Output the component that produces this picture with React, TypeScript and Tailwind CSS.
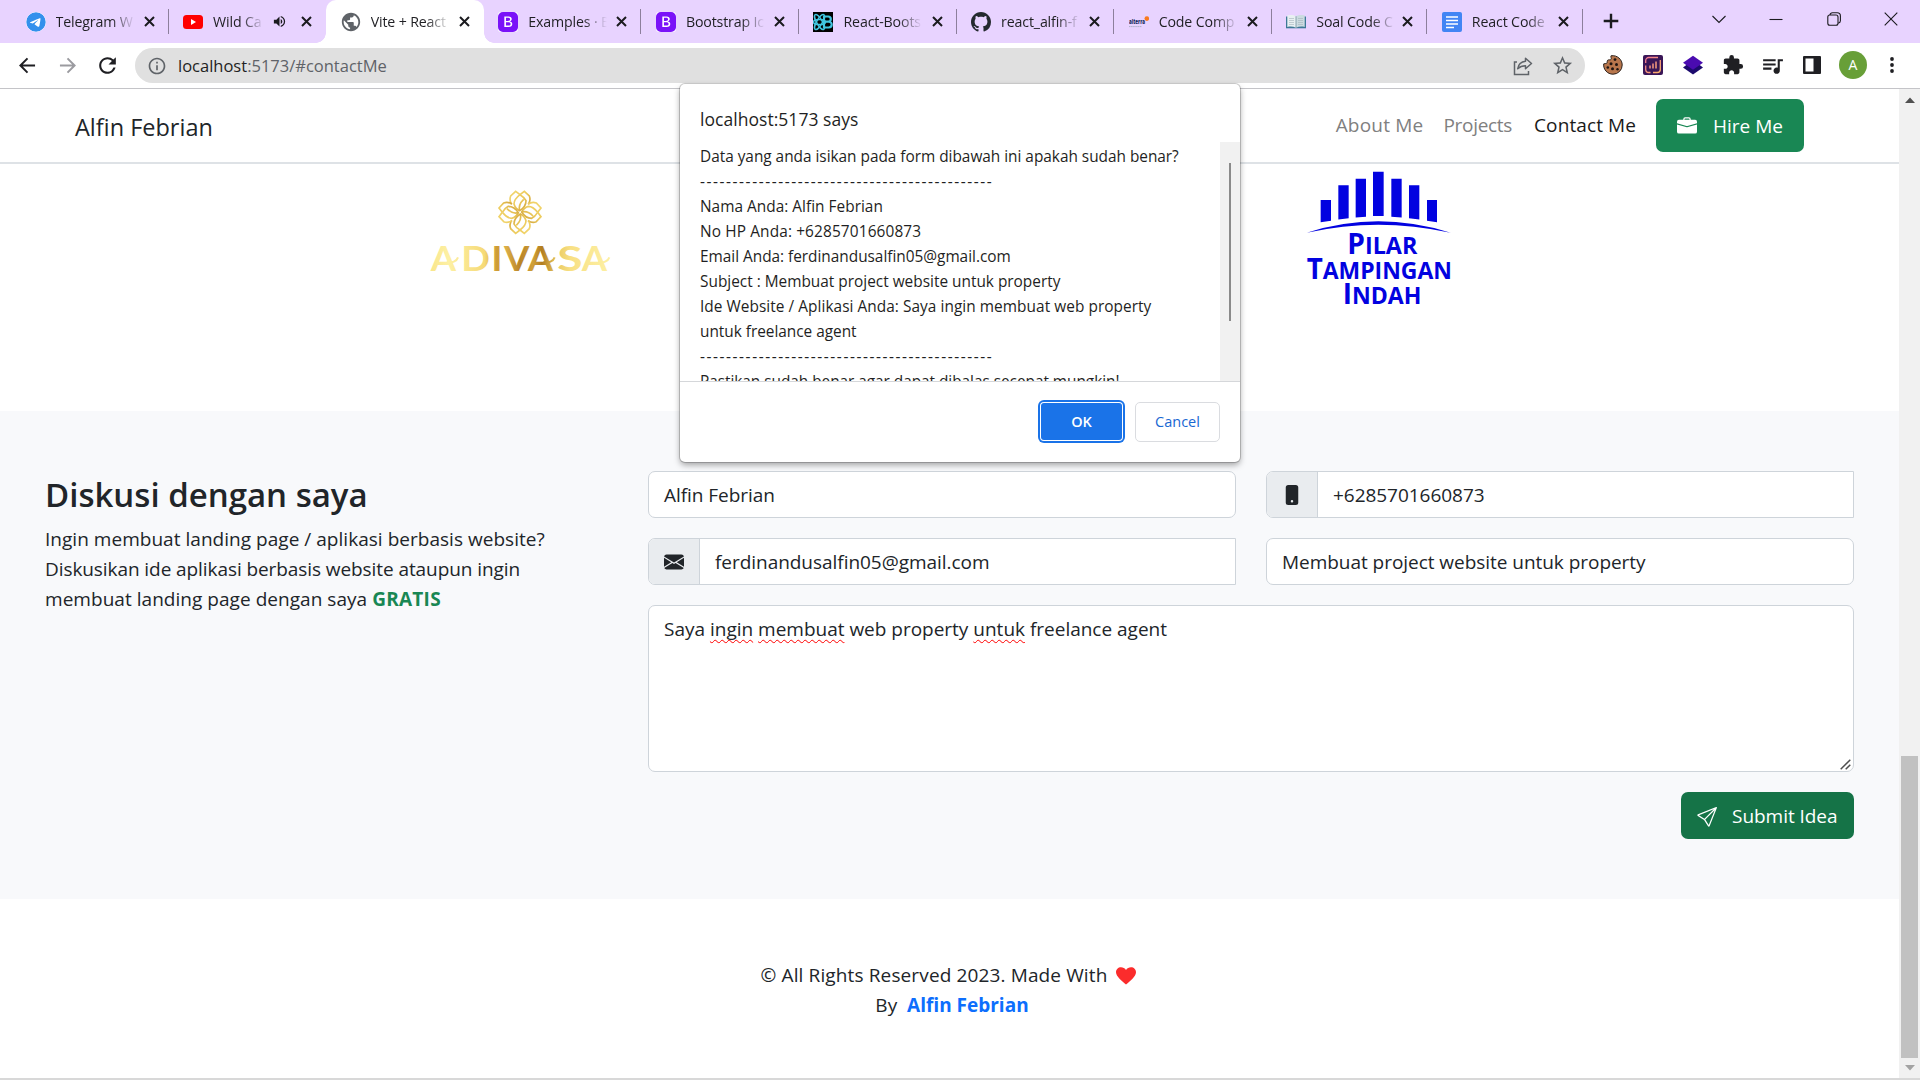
import type { ReactNode } from "react";
import { BsBootstrapFill, BsBriefcaseFill, BsEnvelopeFill, BsGithub, BsPhoneFill, BsSend } from "react-icons/bs";
import { FaTelegram } from "react-icons/fa6";
import { MdExtension, MdInfoOutline, MdPublic, MdQueueMusic, MdRefresh, MdStarBorder, MdVolumeUp } from "react-icons/md";

/* ---------- Tab strip ---------- */

function CloseGlyph() {
  return (
    <svg className="size-[11px] shrink-0" viewBox="0 0 11 11" fill="none" stroke="#1b1b1f" strokeWidth="2">
      <path d="M1 1l9 9M10 1l-9 9" />
    </svg>
  );
}

function YoutubeIcon() {
  return (
    <svg className="h-5 w-5" viewBox="0 0 20 20">
      <rect x="0" y="3" width="20" height="14" rx="3.5" fill="#f00" />
      <path d="M8 7l5 3-5 3z" fill="#fff" />
    </svg>
  );
}

function BootstrapIcon() {
  return (
    <span className="grid size-5 place-items-center bg-white rounded-[3px]">
      <BsBootstrapFill className="size-5 text-[#7a12f8]" />
    </span>
  );
}

function ReactBootstrapIcon() {
  return (
    <svg className="size-5" viewBox="0 0 20 20" fill="none" stroke="#41c5e0" strokeWidth="1.5">
      <rect width="20" height="20" fill="#000" stroke="none" />
      <ellipse cx="6.5" cy="10" rx="6" ry="2.6" />
      <ellipse cx="6.5" cy="10" rx="8.5" ry="2.8" transform="rotate(60 6.5 10)" />
      <ellipse cx="6.5" cy="10" rx="8.5" ry="2.8" transform="rotate(-60 6.5 10)" />
      <path d="M11 4.5h4.2a2.6 2.6 0 010 5.2H11zM11 9.7h4.8a2.9 2.9 0 010 5.8H11z" strokeWidth="2.2" />
    </svg>
  );
}

function AlterraIcon() {
  return (
    <svg className="size-5" viewBox="0 0 20 20">
      <text x="0" y="12.3" fontSize="6" fontWeight="800" fontFamily="Open Sans, sans-serif" fill="#1d2f63" textLength="16" lengthAdjust="spacingAndGlyphs">
        alterra
      </text>
      <path d="M0 14.6h13" stroke="#aab0c8" strokeWidth="1" strokeDasharray="1.5 .6" />
      <circle cx="17.8" cy="6.6" r="2.3" fill="#f97a1f" />
    </svg>
  );
}

function BookIcon() {
  return (
    <svg className="size-5" viewBox="0 0 20 20">
      <path d="M0 4.5h20v11.8H0z" fill="#3d7896" />
      <path d="M1.3 3.5c3-.8 6.2-.6 8.7.8v11.4c-2.5-1.3-5.7-1.5-8.7-.8z" fill="#e8f0f2" />
      <path d="M18.7 3.5c-3-.8-6.2-.6-8.7.8v11.4c2.5-1.3 5.7-1.5 8.7-.8z" fill="#cbdbe0" />
      <path d="M3 6.5h5M3 8.5h5M3 10.5h5M3 12.5h5M12 6.5h5M12 8.5h5M12 10.5h5M12 12.5h5" stroke="#a4b4bb" strokeWidth=".6" />
      <path d="M10 4.3V16" stroke="#7493a0" strokeWidth=".8" />
    </svg>
  );
}

function DocsIcon() {
  return (
    <svg className="size-5" viewBox="0 0 20 20">
      <rect width="20" height="20" rx="2" fill="#4285f4" />
      <path d="M4 5h12M4 8.5h12M4 12h12M4 15.5h8" stroke="#fff" strokeWidth="1.7" />
    </svg>
  );
}

type TabInfo = { title: string; icon: ReactNode; active?: boolean; sound?: boolean; divider?: boolean; narrow?: boolean };

const tabs: TabInfo[] = [
  { title: "Telegram W", icon: <FaTelegram className="size-5 rounded-full bg-white text-[#3390ec]" />, divider: true },
  { title: "Wild Ca", icon: <YoutubeIcon />, sound: true },
  { title: "Vite + React", icon: <MdPublic className="size-[22px] -m-px text-[#5f6368]" />, active: true },
  { title: "Examples · B", icon: <BootstrapIcon />, divider: true },
  { title: "Bootstrap Ic", icon: <BootstrapIcon />, divider: true },
  { title: "React-Boots", icon: <ReactBootstrapIcon />, divider: true },
  { title: "react_alfin-f", icon: <BsGithub className="size-5 text-[#24292f]" />, divider: true },
  { title: "Code Comp", icon: <AlterraIcon />, divider: true },
  { title: "Soal Code C", icon: <BookIcon />, divider: true, narrow: true },
  { title: "React Code", icon: <DocsIcon />, divider: true, narrow: true },
];

function Tab({ tab }: { tab: TabInfo }) {
  return (
    <div
      className={
        "relative flex h-[43px] shrink-0 items-center pl-[14.5px] pr-[14px] " +
        (tab.narrow ? "w-[155.6px] " : "w-[157.6px] ") +
        (tab.active ? "rounded-t-[10px] bg-white" : "")
      }
    >
      {tab.active && (
        <>
          <span className="absolute bottom-0 -left-2.5 size-2.5 bg-[radial-gradient(circle_at_0_0,transparent_9.5px,#fff_10px)]" />
          <span className="absolute bottom-0 -right-2.5 size-2.5 bg-[radial-gradient(circle_at_100%_0,transparent_9.5px,#fff_10px)]" />
        </>
      )}
      <span className="mr-[10px] grid size-5 shrink-0 place-items-center">{tab.icon}</span>
      <span
        className={
          "overflow-hidden text-[14.2px] leading-5 tracking-[-0.15px] whitespace-nowrap text-[#1f1f23] " +
          (tab.sound
            ? "w-[51px] [mask-image:linear-gradient(to_right,#000_55%,transparent)]"
            : "w-[79px] [mask-image:linear-gradient(to_right,#000_70%,transparent)]")
        }
      >
        {tab.title}
      </span>
      {tab.sound && <MdVolumeUp className="ml-2 size-[15px] shrink-0 text-[#1b1b1f]" />}
      <span className="ml-auto flex">
        <CloseGlyph />
      </span>
      {tab.divider && <span className="absolute right-0 top-[9px] h-[25px] w-px bg-[#8d7f9c]" />}
    </div>
  );
}

function TabStrip() {
  return (
    <div className="flex h-[43px] bg-[#e8d3ff] pl-[11px]">
      {tabs.map((t) => (
        <Tab key={t.title} tab={t} />
      ))}
      <svg className="ml-[20px] mt-[13px] size-4" viewBox="0 0 16 16" stroke="#1b1b1f" strokeWidth="2.4">
        <path d="M8 .7v14.6M.7 8h14.6" />
      </svg>
      <div className="ml-auto mr-[22px] mt-[11px] flex h-[15px] items-center gap-[43.5px] text-[#1b1b1f]">
        <svg className="size-[14px]" viewBox="0 0 14 14" fill="none" stroke="currentColor" strokeWidth="1.1">
          <path d="M.5 4l6.5 6.5L13.5 4" />
        </svg>
        <svg className="size-[14px]" viewBox="0 0 14 14" stroke="currentColor" strokeWidth="1.1">
          <path d="M.5 7.5h13" />
        </svg>
        <svg className="size-[14px]" viewBox="0 0 14 14" fill="none" stroke="currentColor" strokeWidth="1.1">
          <rect x=".8" y="3" width="10.2" height="10.2" rx="2" />
          <path d="M3 3c.2-1.500 1.200-2.200 2.500-2.200h4.700c2 0 3.200 1.200 3.200 3.200v4.700c0 1.300-.8 2.200-2.200 2.500" />
        </svg>
        <svg className="size-[14px]" viewBox="0 0 14 14" stroke="currentColor" strokeWidth="1.1">
          <path d="M.7.7l12.6 12.6M13.3.7L.7 13.3" />
        </svg>
      </div>
    </div>
  );
}

/* ---------- Toolbar ---------- */

function ArrowIcon({ className }: { className: string }) {
  return (
    <svg className={className} viewBox="0 0 18 18" fill="none" stroke="currentColor" strokeWidth="2.1">
      <path d="M17 9H2M9 1.5L1.5 9 9 16.5" />
    </svg>
  );
}

function CookieIcon() {
  return (
    <svg className="size-5" viewBox="0 0 20 20">
      <path
        d="M8 .8c-.5 1.4.6 2.200.2 3.400-.8 1.200-2.400.2-3.500 1-1 .9 0 2.200-.9 3-.9.700-2.200.1-3.100.7-.6 5.500 3.700 10.300 9.300 10.300a9.200 9.200 0 009.200-9.200C19.200 4.600 14.300-.2 8 .8z"
        fill="#b8764c"
        stroke="#2c211c"
        strokeWidth="1"
      />
      <g fill="#1f1512">
        <circle cx="12" cy="4.600" r="1.400" />
        <circle cx="8" cy="8.700" r="1.500" />
        <circle cx="13.500" cy="9.500" r="1.500" />
        <circle cx="4.800" cy="12.500" r="1.300" />
        <circle cx="9.500" cy="13.700" r="1.500" />
        <circle cx="14.500" cy="14.300" r="1.200" />
      </g>
    </svg>
  );
}

function ChartExtensionIcon() {
  return (
    <svg className="size-5" viewBox="0 0 20 20" fill="none">
      <defs>
        <linearGradient id="chartGlow" x1="0" y1="0" x2="20" y2="20" gradientUnits="userSpaceOnUse">
          <stop offset="0" stopColor="#f06a9b" />
          <stop offset="1" stopColor="#ffc062" />
        </linearGradient>
      </defs>
      <rect width="20" height="20" rx="2" fill="#3a1657" />
      <path d="M2.700 8V5.500a3 3 0 013-3H15M17.300 5v9.500a3 3 0 01-3 3H10M7.500 17.500H5.700a3 3 0 01-3-3V10.500" stroke="url(#chartGlow)" strokeWidth="1.300" />
      <path d="M7 13.500V10.500M10 13.500V8.500M13 13.500V6.500" stroke="url(#chartGlow)" strokeWidth="1.500" />
    </svg>
  );
}

function Toolbar() {
  return (
    <div className="flex h-[46px] items-start border-b border-[#c4c4c8] bg-white">
      <div className="ml-[19px] mt-[11px] flex h-[22px] items-center">
        <ArrowIcon className="size-[17px] text-[#1f1f23]" />
        <ArrowIcon className="ml-[23px] size-[17px] rotate-180 text-[#9b9ba0]" />
        <MdRefresh className="ml-[19px] size-[25px] text-[#1f1f23]" />
      </div>
      <div className="ml-[15px] mt-[5px] flex h-[35px] w-[1450px] items-center rounded-full bg-[#e0e0e0] pl-[12px] pr-[11px]">
        <MdInfoOutline className="size-5 text-[#5f6368]" />
        <span className="ml-[11px] text-[16.5px] leading-6 text-[#5f6368]">
          <span className="text-[#1f1f23]">localhost</span>:5173/#contactMe
        </span>
        <svg className="ml-auto size-5" viewBox="0 0 20 20" fill="none" stroke="#5f6368" strokeWidth="1.5">
          <path d="M4 6H1.500v12.500h14V15" />
          <path d="M12.500 2.200L18.500 7.500l-6 5.200V9.800c-3.200 0-5.600.8-7.800 3 .6-4 3.200-7.200 7.800-7.600z" strokeLinejoin="round" />
        </svg>
        <MdStarBorder className="ml-[18px] size-[23px] text-[#5f6368]" />
      </div>
      <div className="ml-[18px] mt-[8px] flex h-[28px] items-center">
        <CookieIcon />
        <span className="ml-5">
          <ChartExtensionIcon />
        </span>
        <svg className="ml-5 size-5" viewBox="0 0 20 20">
          <path d="M0 12.500L10 5l10 7.500-10 7z" fill="#1c0a6e" />
          <path d="M0 7.700L10 .8l10 6.900-10 7z" fill="#4a0bb0" />
        </svg>
        <MdExtension className="ml-[19px] size-[22px] text-[#1f1f23]" />
        <MdQueueMusic className="ml-[16px] size-[25px] text-[#1f1f23]" />
        <svg className="ml-[18px] h-[18px] w-[18px]" viewBox="0 0 18 18">
          <rect width="18" height="18" rx="1" fill="#1f1f23" />
          <rect x="2.500" y="2.500" width="8" height="13" fill="#fff" />
        </svg>
        <span className="ml-[18px] grid size-[28px] place-items-center rounded-full bg-[#689f38] text-[14px] leading-none text-white">
          A
        </span>
        <svg className="ml-[23px] h-4 w-1" viewBox="0 0 4 16" fill="#1f1f23">
          <circle cx="2" cy="2" r="1.900" />
          <circle cx="2" cy="8" r="1.900" />
          <circle cx="2" cy="14" r="1.900" />
        </svg>
      </div>
    </div>
  );
}

/* ---------- Client logos ---------- */

const petals = [0, 90, 180, 270];
const adivasaLetters = [
  { c: "A", x: 92, w: 76 },
  { c: "D", x: 184, w: 86 },
  { c: "I", x: 274, w: 34 },
  { c: "V", x: 312, w: 76 },
  { c: "A", x: 383, w: 76 },
  { c: "S", x: 472, w: 76 },
  { c: "A", x: 545, w: 76 },
];

function AdivasaLogo() {
  return (
    <svg className="mt-[6px] h-[120px] w-[260px]" viewBox="0 0 780 360">
      <defs>
        <linearGradient id="goldText" gradientUnits="userSpaceOnUse" x1="92" y1="0" x2="630" y2="0">
          <stop offset="0" stopColor="#f9e68c" />
          <stop offset=".1" stopColor="#fdf0a4" />
          <stop offset=".3" stopColor="#f6da78" />
          <stop offset=".37" stopColor="#cd9a35" />
          <stop offset=".42" stopColor="#dcae48" />
          <stop offset=".5" stopColor="#b98427" />
          <stop offset=".57" stopColor="#d0a03a" />
          <stop offset=".62" stopColor="#b27d1f" />
          <stop offset=".7" stopColor="#e8c860" />
          <stop offset=".78" stopColor="#f8e084" />
          <stop offset="1" stopColor="#fdf0a4" />
        </linearGradient>
        <linearGradient id="goldMark" gradientUnits="userSpaceOnUse" x1="300" y1="70" x2="425" y2="185">
          <stop offset="0" stopColor="#f5dc78" />
          <stop offset=".35" stopColor="#ecca5c" />
          <stop offset=".6" stopColor="#c8962f" />
          <stop offset="1" stopColor="#dcb24a" />
        </linearGradient>
      </defs>
      <g fill="none" stroke="url(#goldMark)" strokeWidth="5">
        {petals.map((deg) => (
          <g key={deg} transform={`rotate(${deg} 360 127)`}>
            <path d="M360 74L347 64L332 78Q327 90 335 103" />
            <path d="M360 74L373 64L388 78Q393 90 385 103" />
            <path d="M360 74Q342 88 342 102Q346 116 359 122Q378 110 378 92Q373 82 360 74" />
            <path d="M359 122Q354 104 371 88" />
          </g>
        ))}
      </g>
      <g fontFamily="Lato, sans-serif" fontWeight="700" fontSize="101" fill="url(#goldText)">
        {adivasaLetters.map((l) => (
          <text key={l.x} x={l.x} y="302" textLength={l.w} lengthAdjust="spacingAndGlyphs">
            {l.c}
          </text>
        ))}
      </g>
      <g fill="none" stroke="url(#goldText)" strokeWidth="6">
        <path d="M140 276C156 280 170 274 174 262M430 276C446 280 460 274 464 262M594 276C610 280 624 274 628 262" />
      </g>
    </svg>
  );
}

function PilarLogo() {
  return (
    <svg className="h-[156px] w-[200px]" viewBox="0 12 600 468" fill="#0202e0">
      <path d="M122 120h31v62l-31 5zM175 76h31v99l-31 3.500zM227 56h31v114l-31 2.500zM279 35h32v133h-32zM334 56h31v116.500l-31-2.500zM387 76h31v102.500l-31-3.500zM441 120h30v67l-30-5z" />
      <path d="M80 218Q190 184 295 184T512 218Q400 194 295 194T80 218z" />
      <g fontFamily="Open Sans, sans-serif" fontWeight="700">
        <text x="202" y="281" fontSize="87" textLength="210" lengthAdjust="spacingAndGlyphs">
          P<tspan fontSize="72">ILAR</tspan>
        </text>
        <text x="80" y="356" fontSize="87" textLength="436" lengthAdjust="spacingAndGlyphs">
          T<tspan fontSize="72">AMPINGAN</tspan>
        </text>
        <text x="188" y="432" fontSize="87" textLength="236" lengthAdjust="spacingAndGlyphs">
          I<tspan fontSize="72">NDAH</tspan>
        </text>
      </g>
    </svg>
  );
}

/* ---------- Page ---------- */

function Navbar() {
  return (
    <nav className="flex h-[75px] items-center border-b-2 border-[#dee2e6] bg-white pl-[75px] pr-[95px]">
      <span className="mt-[2px] text-[23.5px] leading-[30px]">Alfin Febrian</span>
      <div className="ml-auto flex items-center pb-px text-[19px] leading-[30px]">
        <span className="tracking-[0.2px] text-[#808080]">About Me</span>
        <span className="ml-[20px] tracking-[-0.3px] text-[#808080]">Projects</span>
        <span className="ml-[22px] tracking-[0.1px] text-[#1a1a1a]">Contact Me</span>
      </div>
      <button className="ml-[20px] flex h-[53px] w-[148px] items-center rounded-[7px] bg-[#198754] pl-[21px] text-[19px] leading-[30px] text-white">
        <BsBriefcaseFill className="size-5" />
        <span className="ml-[16px]">Hire Me</span>
      </button>
    </nav>
  );
}

function Field({ icon, value }: { icon?: ReactNode; value: string }) {
  return (
    <div
      className={
        "flex h-[47px] border border-[#ced4da] bg-white text-[19px] leading-[30px] " +
        (icon ? "rounded-l-[7px]" : "rounded-[7px]")
      }
    >
      {icon && (
        <span className="grid w-[51px] shrink-0 place-items-center rounded-l-[6px] border-r border-[#ced4da] bg-[#e9ecef]">
          {icon}
        </span>
      )}
      <span className="self-center pl-[15px] tracking-[-0.04px]">{value}</span>
    </div>
  );
}

function Misspelled({ children }: { children: string }) {
  return (
    <span className="underline decoration-[#f00] decoration-wavy decoration-1 underline-offset-[3px] [text-decoration-skip-ink:none]">
      {children}
    </span>
  );
}

function ContactSection() {
  return (
    <section className="flex h-[488px] bg-[#f8f9fb] pl-[45px] pr-[45px] pt-[60px]">
      <div className="w-[603px] shrink-0">
        <h2 className="mb-[8px] pt-[2px] text-[33px] leading-[43px] font-semibold">Diskusi dengan saya</h2>
        <p className="text-[19px] leading-[30px]">
          <span className="tracking-[0.03px]">Ingin membuat landing page / aplikasi berbasis website?</span>
          <br />
          <span className="tracking-[-0.08px]">Diskusikan ide aplikasi berbasis website ataupun ingin</span>
          <br />
          <span className="tracking-[0.04px]">membuat landing page dengan saya </span>
          <b className="font-bold tracking-[0.25px] text-[#198754]">GRATIS</b>
        </p>
      </div>
      <div className="flex grow flex-col gap-5">
        <div className="grid grid-cols-2 gap-x-[30px] gap-y-5">
          <Field value="Alfin Febrian" />
          <Field icon={<BsPhoneFill className="size-5" />} value="+6285701660873" />
          <Field icon={<BsEnvelopeFill className="size-5" />} value="ferdinandusalfin05@gmail.com" />
          <Field value="Membuat project website untuk property" />
        </div>
        <div className="relative h-[167px] rounded-[7px] border border-[#ced4da] bg-white px-[15px] py-[7.5px] text-[19px] leading-[30px] tracking-[-0.01px]">
          Saya <Misspelled>ingin</Misspelled> <Misspelled>membuat</Misspelled> web property{" "}
          <Misspelled>untuk</Misspelled> freelance agent
          <svg className="absolute right-[2px] bottom-[1px] size-[11px]" viewBox="0 0 11 11" stroke="#4f4f4f" strokeWidth="1.5">
            <path d="M.7 10.300l9.600-9.600M5.700 10.300l4.600-4.600" />
          </svg>
        </div>
        <button className="flex h-[47px] w-[173px] items-center self-end rounded-[7px] bg-[#157347] pl-[16px] text-[19px] leading-[30px] text-white">
          <BsSend className="mt-[3px] size-5" />
          <span className="ml-[15px] tracking-[-0.04px]">Submit Idea</span>
        </button>
      </div>
    </section>
  );
}

function Footer() {
  return (
    <footer className="grow bg-white pt-[61px] text-center text-[19px] leading-[30px]">
      <p className="flex items-center justify-center tracking-[0.13px]">
        © All Rights Reserved 2023. Made With
        <svg className="ml-[9px] mr-[2px] mt-[2px] h-[18px] w-5" viewBox="0 0 20 18">
          <path d="M10 17.500C6 14 0 9.500 0 5.200 0 2.300 2.200.2 5 .2c2 0 3.900 1 5 2.800C11.100 1.200 13 .2 15 .2c2.800 0 5 2.100 5 5 0 4.300-6 8.800-10 12.300z" fill="#fb2c2c" />
        </svg>
      </p>
      <p className="pl-[5px]">
        By <b className="ml-[5px] font-bold text-[#0d6efd]">Alfin Febrian</b>
      </p>
    </footer>
  );
}

function PageScrollbar() {
  return (
    <div className="flex w-[21px] shrink-0 flex-col items-center bg-[#f1f1f1] pt-[8px] pb-[7px]">
      <svg className="h-[6px] w-[10px]" viewBox="0 0 10 6">
        <path d="M0 6l5-5.500L10 6z" fill="#505050" />
      </svg>
      <div className="mt-auto mb-[7px] h-[302px] w-[17px] bg-[#c1c1c1]" />
      <svg className="h-[6px] w-[10px]" viewBox="0 0 10 6">
        <path d="M0 0l5 5.500L10 0z" fill="#a3a3a3" />
      </svg>
    </div>
  );
}

/* ---------- Confirm dialog ---------- */

const rule = "-".repeat(45);
const messageLines = [
  { text: "Data yang anda isikan pada form dibawah ini apakah sudah benar?", spacing: "tracking-[-0.02px]" },
  { text: rule, spacing: "tracking-[1.565px]" },
  { text: "Nama Anda: Alfin Febrian", spacing: "tracking-[0.02px]" },
  { text: "No HP Anda: +6285701660873", spacing: "tracking-[0.13px]" },
  { text: "Email Anda: ferdinandusalfin05@gmail.com", spacing: "tracking-[-0.02px]" },
  { text: "Subject : Membuat project website untuk property", spacing: "tracking-[0px]" },
  { text: "Ide Website / Aplikasi Anda: Saya ingin membuat web property", spacing: "tracking-[0.05px]" },
  { text: "untuk freelance agent", spacing: "tracking-[-0.02px]" },
  { text: rule, spacing: "tracking-[1.565px]" },
  { text: "Pastikan sudah benar agar dapat dibalas secepat mungkin!", spacing: "tracking-[-0.04px]" },
];

function ConfirmDialog() {
  return (
    <div className="absolute top-[84px] left-[680px] flex h-[378px] w-[560px] flex-col rounded-[5px] bg-white text-[#1f1f23] shadow-[0_0_0_1px_rgba(0,0,0,0.18),0_3px_6px_rgba(0,0,0,0.35)]">
      <h1 className="mt-[23px] pl-[20px] text-[17.5px] leading-6 tracking-[0.04px]">localhost:5173 says</h1>
      <div className="mt-[11px] flex h-[239px] overflow-hidden">
        <div className="grow pt-[1.5px] pl-[20px]">
          {messageLines.map((line, i) => (
            <p key={i} className={"text-[15.4px] leading-[25px] whitespace-nowrap " + line.spacing}>
              {line.text}
            </p>
          ))}
        </div>
        <div className="flex w-5 justify-center bg-[#f1f1f1] pt-[21px]">
          <div className="h-[158px] w-[2px] bg-[#8a8a8a]" />
        </div>
      </div>
      <div className="flex grow justify-end gap-[13px] border-t border-[#d5d7da] pt-[20px] pr-5">
        <button className="mt-px h-[37px] w-[81px] rounded-[3px] bg-[#1a73e8] text-[14.5px] font-semibold text-white shadow-[0_0_0_1px_#fff,0_0_0_3px_#1a73e8]">
          OK
        </button>
        <button className="h-10 w-[85px] rounded-[5px] border border-[#dadce0] text-[14.5px] font-medium text-[#1967d2]">
          Cancel
        </button>
      </div>
    </div>
  );
}

export default function App() {
  return (
    <div className="relative flex h-[1080px] w-[1920px] flex-col overflow-hidden bg-white font-['Open_Sans',sans-serif] text-[#212529]">
      <TabStrip />
      <Toolbar />
      <div className="flex h-[991px] border-b-2 border-[#d8d8d8]">
        <main className="flex grow flex-col">
          <Navbar />
          <div className="flex h-[247px] shrink-0 items-start bg-white pl-[400px]">
            <AdivasaLogo />
            <div className="ml-[620px]">
              <PilarLogo />
            </div>
          </div>
          <ContactSection />
          <Footer />
        </main>
        <PageScrollbar />
      </div>
      <ConfirmDialog />
    </div>
  );
}
